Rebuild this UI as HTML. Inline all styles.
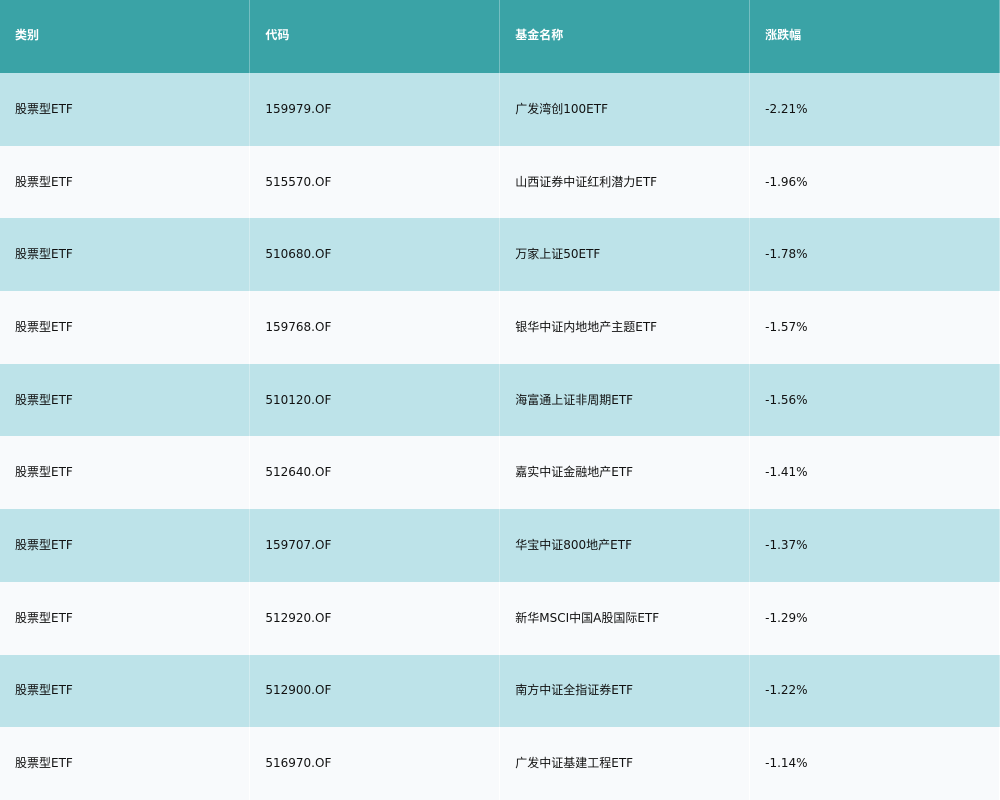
<!DOCTYPE html>
<html><head><meta charset="utf-8"><style>
*{margin:0;padding:0;box-sizing:border-box}
body{width:1000px;height:800px;overflow:hidden;background:#f8fafc;font-family:"DejaVu Sans","Noto Sans CJK SC",sans-serif;font-size:12px;color:#111}
table{border-collapse:collapse;width:1000px;table-layout:fixed}
td,th{padding:0 0 0 15px;text-align:left;vertical-align:middle;border-right:1px solid rgba(255,255,255,0.3);line-height:14px}
th{height:73px;background:#3aa3a6;color:#fff;font-weight:bold;font-size:12px;padding-bottom:3px}
td{height:72.7px;padding-bottom:1px}
tr.a td{background:#bde3e9}
tr.b td{background:#f8fafc;border-right:1px solid #fff}
</style></head><body>
<table>
<tr><th>类别</th><th>代码</th><th>基金名称</th><th>涨跌幅</th></tr>
<tr class="a"><td>股票型ETF</td><td>159979.OF</td><td>广发湾创100ETF</td><td>-2.21%</td></tr>
<tr class="b"><td>股票型ETF</td><td>515570.OF</td><td>山西证券中证红利潜力ETF</td><td>-1.96%</td></tr>
<tr class="a"><td>股票型ETF</td><td>510680.OF</td><td>万家上证50ETF</td><td>-1.78%</td></tr>
<tr class="b"><td>股票型ETF</td><td>159768.OF</td><td>银华中证内地地产主题ETF</td><td>-1.57%</td></tr>
<tr class="a"><td>股票型ETF</td><td>510120.OF</td><td>海富通上证非周期ETF</td><td>-1.56%</td></tr>
<tr class="b"><td>股票型ETF</td><td>512640.OF</td><td>嘉实中证金融地产ETF</td><td>-1.41%</td></tr>
<tr class="a"><td>股票型ETF</td><td>159707.OF</td><td>华宝中证800地产ETF</td><td>-1.37%</td></tr>
<tr class="b"><td>股票型ETF</td><td>512920.OF</td><td>新华MSCI中国A股国际ETF</td><td>-1.29%</td></tr>
<tr class="a"><td>股票型ETF</td><td>512900.OF</td><td>南方中证全指证券ETF</td><td>-1.22%</td></tr>
<tr class="b"><td>股票型ETF</td><td>516970.OF</td><td>广发中证基建工程ETF</td><td>-1.14%</td></tr>
</table>
</body></html>
